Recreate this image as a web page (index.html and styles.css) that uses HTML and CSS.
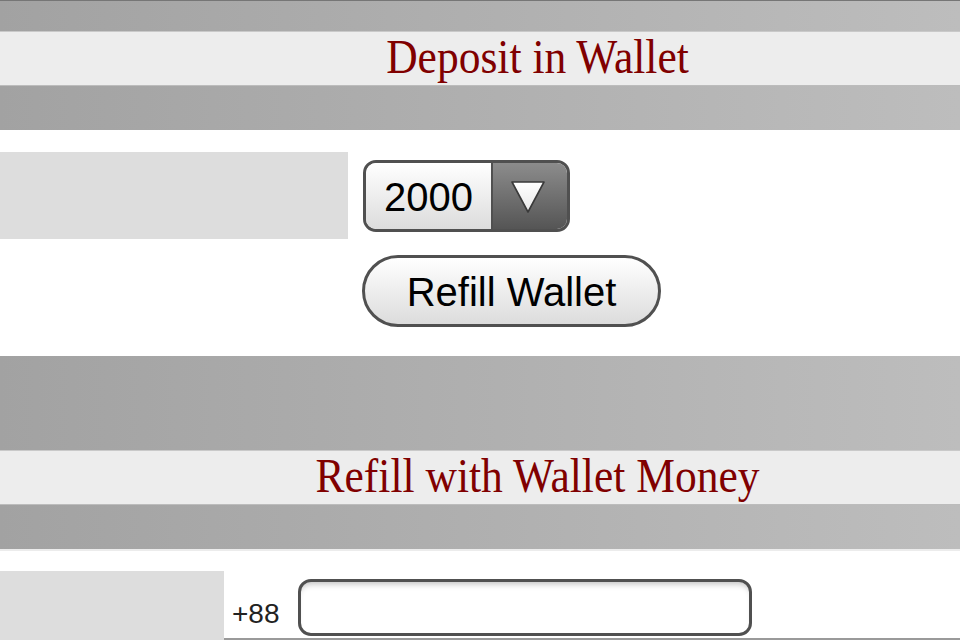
FILE: index.html
```html
<!DOCTYPE html>
<html lang="en">
<head>
<meta charset="utf-8">
<title>Wallet</title>
<link rel="stylesheet" href="styles.css">
</head>
<body>
  <div class="topline"></div>
  <section class="section">
    <div class="band band-top-short"></div>
    <h2 class="title"><span class="title-text">Deposit in Wallet</span></h2>
    <div class="band band-bottom"></div>
  </section>

  <div class="form form-deposit">
    <div class="label-cell label-wide"></div>
    <div class="controls">
      <div class="dropdown">
        <span class="dropdown-value">2000</span>
        <span class="dropdown-arrow">
          <svg width="36" height="34" viewBox="0 0 36 34">
            <defs>
              <linearGradient id="tri" x1="0" y1="0" x2="0" y2="1">
                <stop offset="0" stop-color="#ffffff"/>
                <stop offset="1" stop-color="#e8e8e8"/>
              </linearGradient>
            </defs>
            <polygon points="2,2 34,2 18,32" fill="url(#tri)" stroke="#3a3a3a" stroke-width="1.6" stroke-linejoin="round"/>
          </svg>
        </span>
      </div>
      <button class="btn" type="button">Refill Wallet</button>
    </div>
  </div>

  <section class="section">
    <div class="band band-top-tall"></div>
    <h2 class="title"><span class="title-text">Refill with Wallet Money</span></h2>
    <div class="band band-bottom"></div>
    <div class="sepline"></div>
  </section>

  <div class="form form-phone">
    <div class="label-cell label-narrow"></div>
    <div class="phone-row">
      <span class="prefix">+88</span>
      <input class="phone-input" type="text" aria-label="Phone number">
    </div>
  </div>
  <div class="bottomline"></div>
</body>
</html>
```
FILE: styles.css
```css
* { box-sizing: border-box; }

html, body {
  margin: 0;
  padding: 0;
  background: #ffffff;
  width: 960px;
  height: 640px;
  overflow: hidden;
  font-family: "Liberation Sans", Arial, sans-serif;
}

.topline {
  height: 1px;
  background: #767676;
}

.band {
  background: linear-gradient(to right, #a2a2a2, #bdbdbd);
}

.band-top-short { height: 30px; }
.band-top-tall { height: 94px; }
.band-bottom { height: 44px; }

.title {
  margin: 0;
  height: 55px;
  line-height: 52px;
  background: #ededed;
  border-top: 1px solid #c9c9c9;
  border-bottom: 1px solid #bcbcbc;
  padding-left: 115px;
  text-align: center;
  font-family: "Liberation Serif", "Times New Roman", serif;
  font-weight: normal;
  font-size: 43.5px;
  color: #800000;
  white-space: nowrap;
}

.title-text {
  display: inline-block;
  transform: scaleY(1.1);
  transform-origin: 50% 75%;
}

.sepline {
  height: 2px;
  background: #ececec;
}

.form {
  display: flex;
  align-items: flex-start;
}

.form-deposit {
  margin-top: 22px;
  margin-bottom: 29px;
}

.label-cell {
  background: #dddddd;
  flex-shrink: 0;
}

.label-wide {
  width: 348px;
  height: 87px;
}

.controls {
  display: flex;
  flex-direction: column;
  align-items: flex-start;
  gap: 23px;
  padding: 8px 0 0 15px;
}

.dropdown {
  display: flex;
  width: 207px;
  height: 72px;
  border: 3px solid #505050;
  border-radius: 13px;
  overflow: hidden;
}

.dropdown-value {
  flex: 1;
  display: flex;
  align-items: center;
  padding-left: 18px;
  padding-top: 2px;
  background: linear-gradient(#ffffff, #dcdcdc);
  border-right: 2px solid #505050;
  font-size: 40px;
  color: #000;
}

.dropdown-arrow {
  width: 74px;
  display: flex;
  align-items: center;
  justify-content: center;
  padding-right: 4px;
  padding-top: 2px;
  background: linear-gradient(#8c8c8c, #555555);
}

.btn {
  width: 299px;
  height: 72px;
  border: 3px solid #505050;
  border-radius: 36px;
  background: linear-gradient(#ffffff, #dcdcdc);
  font-family: "Liberation Sans", Arial, sans-serif;
  font-size: 40px;
  color: #000;
  padding: 2px 0 0;
  margin-left: -1px;
}

.form-phone {
  margin-top: 20px;
}

.label-narrow {
  width: 224px;
  height: 80px;
}

.phone-row {
  display: flex;
  align-items: flex-end;
  gap: 18px;
  padding: 8px 0 0 8px;
}

.prefix {
  font-size: 28px;
  color: #222;
  line-height: 1;
  padding-bottom: 8px;
}

.phone-input {
  width: 454px;
  height: 57px;
  border: 3px solid #505050;
  border-radius: 13px;
  background: #fff;
  box-shadow: inset 0 6px 6px -4px rgba(0,0,0,0.25);
  outline: none;
  font-size: 28px;
}

.bottomline {
  position: absolute;
  left: 224px;
  right: 0;
  top: 638px;
  height: 2px;
  background: #9a9a9a;
}
```
